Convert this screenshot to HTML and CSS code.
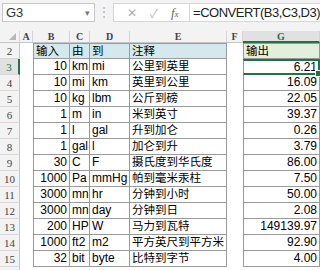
FILE: index.html
```html
<!DOCTYPE html>
<html lang="zh">
<head>
    <meta charset="UTF-8">
    <title>CONVERT</title>
    <link rel="stylesheet" href="styles.css">
</head>
<body>

    <!-- Formula bar -->
    <div class="formula-bar">
        <div class="name-box">
            <span>G3</span>
            <span class="arrow">&#9662;</span>
        </div>
        <div class="dots">&#8942;</div>
        <div class="fx-buttons">
            <span class="cancel">&#10005;</span>
            <span class="enter">&#10003;</span>
            <span class="fx">f<small>x</small></span>
        </div>
        <div class="formula">=CONVERT(B3,C3,D3)</div>
    </div>

    <!-- Sheet -->
    <div class="sheet" id="sheet">
        <div class="ch corner"><span class="tri"></span></div>
        <div class="ch">A</div>
        <div class="ch">B</div>
        <div class="ch">C</div>
        <div class="ch">D</div>
        <div class="ch">E</div>
        <div class="ch">F</div>
        <div class="ch active-col">G</div>
    </div>

    <script>
        const rows = [
            [10, 'km', 'mi', '公里到英里', '6.21'],
            [10, 'mi', 'km', '英里到公里', '16.09'],
            [10, 'kg', 'lbm', '公斤到磅', '22.05'],
            [1, 'm', 'in', '米到英寸', '39.37'],
            [1, 'l', 'gal', '升到加仑', '0.26'],
            [1, 'gal', 'l', '加仑到升', '3.79'],
            [30, 'C', 'F', '摄氏度到华氏度', '86.00'],
            [1000, 'Pa', 'mmHg', '帕到毫米汞柱', '7.50'],
            [3000, 'mn', 'hr', '分钟到小时', '50.00'],
            [3000, 'mn', 'day', '分钟到日', '2.08'],
            [200, 'HP', 'W', '马力到瓦特', '149139.97'],
            [1000, 'ft2', 'm2', '平方英尺到平方米', '92.90'],
            [32, 'bit', 'byte', '比特到字节', '4.00']
        ];

        const sheet = document.getElementById('sheet');
        let html = '';

        // header row of the table
        html += '<div class="rh">2</div><div class="cell"></div>';
        html += '<div class="cell bd hd first top cn">输入</div>';
        html += '<div class="cell bd hd top cn">由</div>';
        html += '<div class="cell bd hd top cn">到</div>';
        html += '<div class="cell bd hd top cn">注释</div>';
        html += '<div class="cell"></div>';
        html += '<div class="cell bd out first top cn">输出</div>';

        rows.forEach((r, i) => {
            const n = i + 3;
            const sel = n === 3;
            html += `<div class="rh${sel ? ' active-row' : ''}">${n}</div><div class="cell"></div>`;
            html += `<div class="cell bd first num">${r[0]}</div>`;
            html += `<div class="cell bd">${r[1]}</div>`;
            html += `<div class="cell bd">${r[2]}</div>`;
            html += `<div class="cell bd cn">${r[3]}</div>`;
            html += '<div class="cell"></div>';
            html += `<div class="cell bd first num${sel ? ' selected' : ''}">${r[4]}</div>`;
        });

        html += '<div class="rh"></div>';
        sheet.insertAdjacentHTML('beforeend', html);
    </script>

</body>
</html>
```

FILE: styles.css
```css
* {
    margin: 0;
    padding: 0;
    box-sizing: border-box;
}

body {
    width: 320px;
    height: 270px;
    overflow: hidden;
    background: #fff;
    font-family: 'Liberation Sans', 'Noto Sans CJK SC', sans-serif;
    font-size: 12px;
    color: #000;
}

/* Formula bar */
.formula-bar {
    height: 31px;
    background: #f3f3f3;
    display: flex;
    align-items: flex-start;
    padding: 3px 0 0 2px;
}

.name-box {
    width: 102px;
    height: 19px;
    background: #fff;
    border: 1px solid #c8c8c8;
    display: flex;
    align-items: center;
    justify-content: space-between;
    padding: 0 4px 0 3px;
    font-size: 13px;
    color: #333;
}

.name-box .arrow {
    font-size: 9px;
    color: #777;
}

.dots {
    width: 21px;
    text-align: center;
    color: #b5b5b5;
    font-size: 12px;
    line-height: 19px;
}

.fx-buttons {
    width: 83px;
    height: 19px;
    background: #fff;
    border: 1px solid #d6d6d6;
    border-right: none;
    display: flex;
    align-items: center;
    justify-content: space-around;
    padding: 0 4px 0 6px;
    color: #b0b0b0;
    font-size: 12px;
}

.fx-buttons .enter {
    color: #c0c0c0;
}

.fx-buttons .fx {
    font-family: 'Liberation Serif', serif;
    font-style: italic;
    color: #666;
    font-size: 13px;
}

.fx-buttons .fx small {
    font-size: 9px;
}

.formula {
    flex: 1;
    height: 19px;
    background: #fff;
    border: 1px solid #d6d6d6;
    border-right: none;
    line-height: 17px;
    padding-left: 3px;
    font-size: 13px;
    letter-spacing: -0.5px;
    color: #222;
    white-space: nowrap;
}

/* Sheet grid */
.sheet {
    display: grid;
    grid-template-columns: 20px 13px 37px 20px 40px 97px 16px 77px;
    grid-template-rows: 12px repeat(15, 16px);
}

.ch {
    background: #f3f3f3;
    border-right: 1px solid #d4d4d4;
    border-bottom: 1px solid #c6c6c6;
    font-family: 'Liberation Serif', serif;
    font-weight: bold;
    font-size: 10px;
    color: #444;
    text-align: center;
    line-height: 11px;
}

.ch.active-col {
    background: #e1e1e1;
    color: #217346;
    border-bottom: 2px solid #217346;
}

.corner {
    position: relative;
}

.corner .tri {
    position: absolute;
    right: 3px;
    bottom: 2px;
    border-style: solid;
    border-width: 0 0 7px 7px;
    border-color: transparent transparent #b8b8b8 transparent;
}

.rh {
    background: #f3f3f3;
    border-right: 1px solid #c6c6c6;
    border-bottom: 1px solid #d8d8d8;
    font-family: 'Liberation Serif', serif;
    font-size: 11px;
    color: #444;
    text-align: center;
    line-height: 16px;
    grid-column: 1;
}

.rh.active-row {
    background: #e1e1e1;
    color: #217346;
    border-right: 2px solid #217346;
}

.cell {
    line-height: 15px;
    padding: 0 2px;
    white-space: nowrap;
    overflow: hidden;
}

.cn {
    font-size: 11.5px;
}

.bd {
    border-right: 1px solid #9a9a9a;
    border-bottom: 1px solid #9a9a9a;
}

.bd.first {
    border-left: 1px solid #9a9a9a;
}

.bd.top {
    border-top: 1px solid #9a9a9a;
}

.hd {
    background: #d3e9ee;
}

.out {
    background: #e2efda;
}

.num {
    text-align: right;
}

.selected {
    position: relative;
    border: 2px solid #217346;
    line-height: 12px;
    padding-right: 1px;
    overflow: visible;
}

.selected::after {
    content: '';
    position: absolute;
    right: -4px;
    bottom: -4px;
    width: 5px;
    height: 5px;
    background: #217346;
    border: 1px solid #fff;
}
```
